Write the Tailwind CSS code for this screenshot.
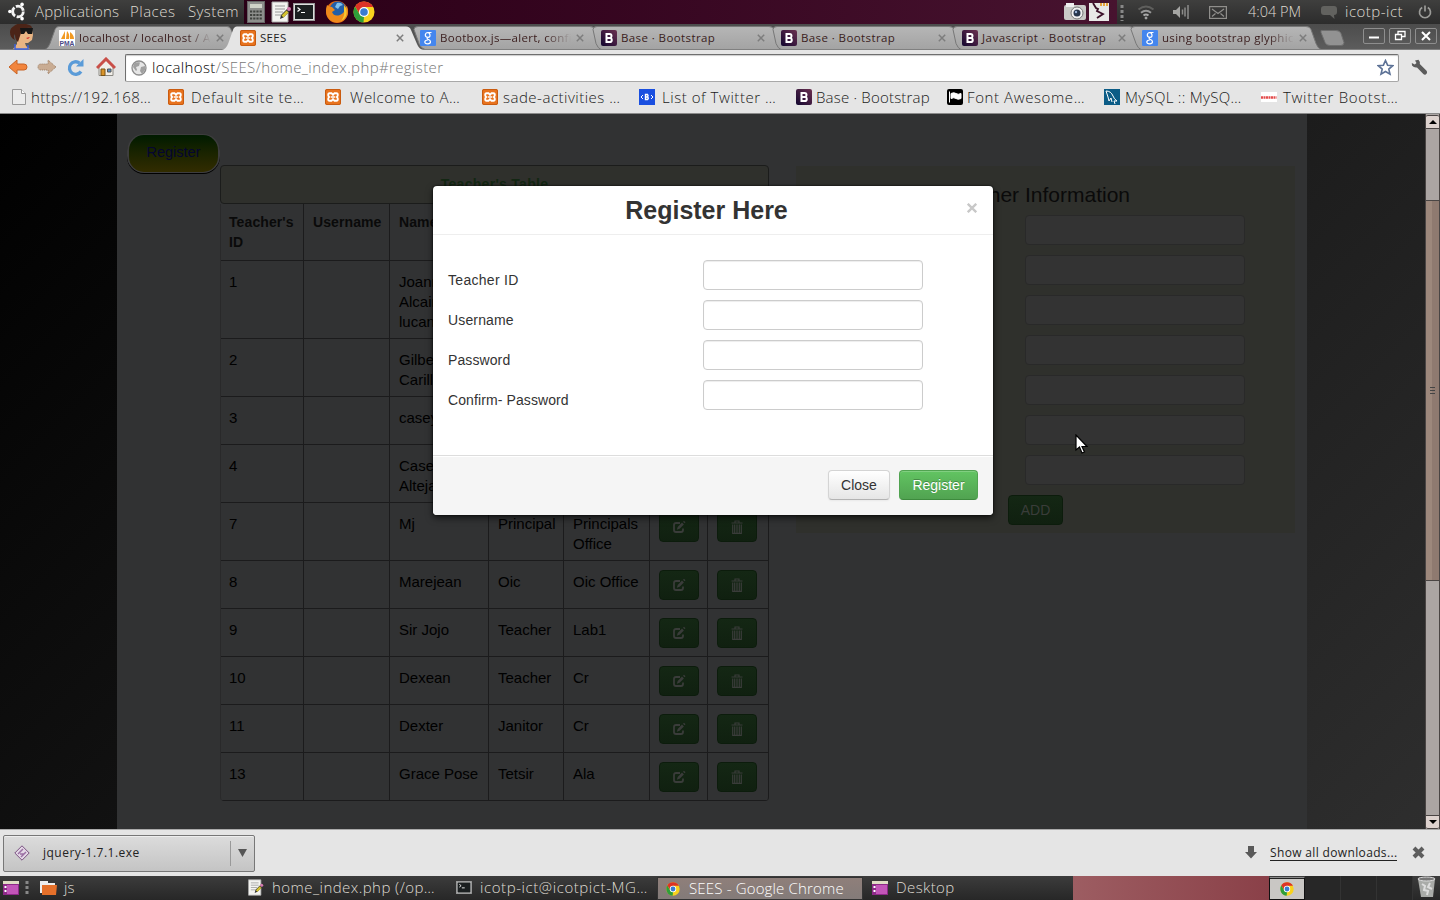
<!DOCTYPE html>
<html lang="en">
<head>
<meta charset="utf-8">
<title>SEES</title>
<script src="https://cdn.jsdelivr.net/npm/@tailwindcss/browser@4"></script>
</head>
<body class="w-[1440px] h-[900px] overflow-hidden bg-black font-['Open_Sans','Noto_Sans',sans-serif]">
<svg class="absolute size-0">
  <symbol id="chrome" viewBox="0 0 22 22"><circle cx="11" cy="11" r="10.500" fill="#f7d21e"/><path d="M2 5.600A10.500 10.500 0 0 1 20.300 6H11L6.800 13z" fill="#dd3226"/><path d="M2 5.600 6.500 13 11 16l-.5 5.500A10.500 10.500 0 0 1 2 5.600z" fill="#2f9e3a"/><circle cx="11" cy="11" r="5" fill="#fff"/><circle cx="11" cy="11" r="3.800" fill="#3a7bd0"/></symbol>
  <symbol id="xampp" viewBox="0 0 16 16"><rect width="16" height="16" rx="2" fill="#e8731e"/><rect x=".5" y=".5" width="15" height="15" rx="1.500" fill="none" stroke="#c95b10"/><path d="M4.500 4.200h2L8 5.800l1.500-1.600h2q1.300 0 1.300 1.800 0 1.300-1 2 1 .7 1 2 0 1.800-1.300 1.800h-2L8 10.200l-1.500 1.600h-2q-1.300 0-1.300-1.800 0-1.300 1-2-1-.7-1-2 0-1.800 1.300-1.800z" fill="none" stroke="#fff" stroke-width="1.900"/><path d="M6 8h4" stroke="#fff" stroke-width="1.500"/></symbol>
  <symbol id="boot" viewBox="0 0 16 16"><rect width="16" height="16" rx="2" fill="url(#bg1)"/><path d="M5.500 4v8h3.300q2 0 2-2.100 0-1.600-1.500-1.900Q10.500 7.500 10.500 6q0-2-2-2zM6 8h3" fill="none" stroke="#fff" stroke-width="2"/></symbol>
  <linearGradient id="bg1" x1="0" y1="1" x2="1" y2="0"><stop offset="0" stop-color="#12062f"/><stop offset="1" stop-color="#6b3050"/></linearGradient>
  <symbol id="goog" viewBox="0 0 16 16"><rect width="16" height="16" rx="1" fill="#4486ee"/><path d="M11.500 2.500H8q-2.700.3-2.700 2.500T7.800 7.300 10 5 8 2.600M7.500 7.500q-1 1 .5 1.700 2.500 1 2.500 2.600 0 2-2.800 2-2.900 0-2.900-1.800T7.800 10" fill="none" stroke="#fff" stroke-width="1.200"/></symbol>
  <symbol id="tx" viewBox="0 0 8 8"><path d="M.8.8l6.400 6.400M7.200.8.800 7.200" stroke="#7d7d7d" stroke-width="1.500"/></symbol>
  <symbol id="term" viewBox="0 0 22 18"><rect x=".5" y=".5" width="21" height="17" fill="#ddd" stroke="#999"/><rect x="2" y="2" width="18" height="14" fill="#1b1f20"/><path d="M4.500 4.500 7 6.500 4.500 8.500M8 9.500h4" stroke="#fff" stroke-width="1.200" fill="none"/></symbol>
  <symbol id="note" viewBox="0 0 20 22"><path d="M1 1h16v20H1z" fill="#f3f3f0" stroke="#aaa"/><path d="M4 5h10M4 8h10M4 11h8M4 14h6" stroke="#999"/><path d="M9 18l1-4 7-7 2.500 2.500-7 7z" fill="#333"/><path d="M10.500 14.500l5-5 2 2-5 5z" fill="#d4c22f"/><circle cx="18" cy="8" r="2" fill="#d77bb0"/></symbol>
  <symbol id="desk" viewBox="0 0 16 14"><rect width="16" height="14" fill="#8d2a88"/><rect width="16" height="3" fill="#dfdcc4"/><rect x="4" y="4" width="11" height="9" fill="#c255b8"/><path d="M1.500 5h2v2h-2zM1.500 9h2v2h-2z" fill="#fff"/></symbol>
  <symbol id="edit" viewBox="0 0 14 14"><path d="M8 3H4Q2 3 2 5v5q0 2 2 2h5q2 0 2-2V8.500" fill="none" stroke="#3a3c3a" stroke-width="1.800"/><path d="M4.800 9.800l.9-2.900 4.300-4.300 1.900 1.900-4.300 4.300z" fill="#3a3c3a"/><path d="M11 1.700l1-1 1.500 1.500-1 1z" fill="#3a3c3a"/></symbol>
  <symbol id="trash" viewBox="0 0 12 14"><path d="M.5 3h11M4 3V1h4v2" fill="none" stroke="#3a3c3a" stroke-width="1.200"/><path d="M1.700 4.500v8.900h8.600V4.500M3.700 4.500v9M6 4.500v9M8.300 4.500v9" fill="none" stroke="#3a3c3a" stroke-width="1.200"/></symbol>
</svg>

<!-- desktop top panel -->
<header class="flex h-6 text-[15px] font-light text-[#dfdbd2]">
  <div class="flex w-[244px] items-center bg-linear-to-b from-[#3f3f3e] to-[#2c2c2c] pb-px pl-2">
    <svg class="mr-[8px] size-[19px] shrink-0" viewBox="0 0 20 20"><circle cx="10.500" cy="10" r="5.600" fill="none" stroke="#f2f2f2" stroke-width="3" stroke-dasharray="10 1.730"/><circle cx="2" cy="10" r="1.900" fill="#fff"/><circle cx="14.800" cy="2.500" r="1.900" fill="#fff"/><circle cx="14.800" cy="17.500" r="1.900" fill="#fff"/></svg>
    <span class="w-[95px] whitespace-nowrap tracking-[0.2px]">Applications</span><span class="w-[58px] whitespace-nowrap tracking-[0.5px]">Places</span><span class="tracking-[0.4px]">System</span>
  </div>
  <div class="flex flex-1 items-center bg-linear-to-r from-[#2a0016] to-[#47132f] pl-[3px]">
    <svg class="mr-[6px] h-[22px] w-[18px]" viewBox="0 0 18 22"><rect x=".5" y=".5" width="17" height="21" fill="#8d8f8c" stroke="#666"/><rect x="3" y="3" width="12" height="4" fill="#cfd3c8"/><path d="M3 10.500h12M3 14h12M3 17.500h12" stroke="#3f423e" stroke-width="2" stroke-dasharray="2.200 1"/></svg>
    <svg class="mr-[2px] h-[22px] w-5"><use href="#note"/></svg>
    <svg class="mr-[10px] h-[18px] w-[22px]"><use href="#term"/></svg>
    <svg class="mr-[4px] size-[24px]" viewBox="0 0 24 24"><circle cx="12" cy="12" r="11" fill="#e66a12"/><circle cx="13" cy="10" r="8.500" fill="#235fa8"/><path d="M12 3q4-1 6 2l-3 1-2 3-3-2z" fill="#7fc0ea"/><path d="M2 5q2 2 5 2l3 3-3 2q2 5 8 3 5-2 5-7l2-2q3 9-3 14-7 5-14 0-6-6-3-15z" fill="#ee8a1c"/><path d="M19 5q4 5 2 11-2 4-5 5 4-5 3-10z" fill="#f7c933"/></svg>
    <svg class="size-[22px]"><use href="#chrome"/></svg>
    <svg class="ml-auto h-[20px] w-[46px]" viewBox="0 0 46 20"><rect y="3" width="22" height="15" rx="2" fill="#c9c9c6"/><rect x="2" y="1" width="8" height="4" fill="#eee"/><circle cx="13" cy="11" r="6" fill="#f0f0f0" stroke="#777"/><circle cx="13" cy="11" r="3.500" fill="#27364d"/><circle cx="12" cy="10" r="1.200" fill="#9bb4d8"/><rect x="25" y="1" width="20" height="18" fill="#e8e8e6"/><path d="M36 2.500h8" stroke="#e7a43b" stroke-width="3" stroke-dasharray="2 1"/><path d="M29 1l3 5 2 1-1 2 6 3-6 4" fill="none" stroke="#3b1028" stroke-width="1.800"/></svg>
    <span class="w-[7px]"></span>
  </div>
  <div class="flex w-[323px] items-center bg-linear-to-b from-[#3f3f3e] to-[#2c2c2c] text-[#dfdbd2]">
    <svg class="ml-[3px] h-[18px] w-[4px]" viewBox="0 0 4 18"><path d="M2 2v16" stroke="#888" stroke-width="3" stroke-dasharray="3 2"/></svg>
    <svg class="ml-[13px] h-4 w-[18px]" viewBox="0 0 18 16" fill="none" stroke="#5f5f5d" stroke-width="2"><path d="M1.500 5.500q7.500-6 15 0"/><path d="M4 8.700q5-4 10 0" stroke="#999"/><path d="M6.500 11.500q2.500-2 5 0" stroke="#aaa"/><circle cx="9" cy="14" r="1" fill="#aaa" stroke="#aaa" stroke-width="1"/></svg>
    <svg class="ml-[17px] h-4 w-[18px]" viewBox="0 0 18 16"><path d="M1 6h3l4-4v12l-4-4H1z" fill="#a5a5a3"/><path d="M10.500 5.500v5M13 3.500v9M16 1v14" stroke="#8c8c8a" stroke-width="1.500"/></svg>
    <svg class="ml-[19px] h-[13px] w-[18px]" viewBox="0 0 18 13" fill="none" stroke="#908f8c" stroke-width="1.200"><rect x=".6" y=".6" width="16.800" height="11.800"/><path d="M3 3l6 4.500L15 3M3 10.500l3.500-3M15 10.500l-3.500-3"/></svg>
    <span class="ml-[21px] w-[73px] whitespace-nowrap text-[14.500px]">4:04 PM</span>
    <svg class="h-[15px] w-4" viewBox="0 0 16 15"><path d="M3 1h10q3 0 3 3v3q0 3-3 3l.5 4L9 10H3Q0 10 0 7V4q0-3 3-3z" fill="#62625f"/></svg>
    <span class="ml-[8px] w-[73px] pb-px tracking-[0.5px] whitespace-nowrap">icotp-ict</span>
    <svg class="size-[14px]" viewBox="0 0 14 14" fill="none" stroke="#9b9b98" stroke-width="1.700"><path d="M4.200 2.500a5.500 5.500 0 1 0 5.600 0M7 .5v6"/></svg>
  </div>
</header>

<!-- browser tab strip -->
<div class="relative h-[26px] bg-linear-to-b from-[#4c4c4c] to-[#5d5d5d]">
  <svg class="absolute inset-0" width="1440" height="26" viewBox="0 0 1440 26">
    <defs><linearGradient id="tg" x1="0" y1="0" x2="0" y2="1"><stop offset="0" stop-color="#b6b6b6"/><stop offset="1" stop-color="#a3a3a3"/></linearGradient></defs>
    <g fill="url(#tg)" stroke="#777">
      <path d="M45 25.500q3-1 5-6l5-14q1-3 4-3h168q3 0 4 3l9 20z"/>
      <path d="M425 25.500q-4-1-6-6l-5-14q0-3 4-3h172q4 0 5 3l6 20z"/>
      <path d="M601 25.500q-3-1-5-6l-3-14q0-3 4-3h172q4 0 5 3l6 20z"/>
      <path d="M781 25.500q-3-1-5-6l-3-14q0-3 4-3h172q4 0 5 3l6 20z"/>
      <path d="M961 25.500q-3-1-5-6l-3-14q0-3 4-3h172q4 0 5 3l6 20z"/>
      <path d="M1141 25.500q-3-1-5-6l-5-14q0-3 4-3h171q4 0 5 3l5 14q2 5 5 6z"/>
      <path d="M1321 6.500h15q4 0 5 3l3 9q0 3-3 3h-11q-4 0-5-3l-4-10z" fill="#929292" stroke="#6d6d6d"/>
    </g>
    <path d="M0 25.500h1440" stroke="#808080"/>
    <path d="M222 26q4-1 6-6l5-14q1-3.500 4-3.500h169q4 0 5 3.500l6 14q2 5 6 6z" fill="#e5e5e5"/>
    <path d="M17 6h15l1 5-1 5-4 3h-3l1 3 4 3H13l4-5z" fill="#e8b483"/>
    <path d="M14 2q5-4 12-2 6 1 6 4-7-1-10 2l-2 6-2 6q-3-2-3-8-2 2 0 6-5-2-5-8 0-4 4-6z" fill="#4b2417"/>
    <path d="M20 4h13l-1 6h-4l-2-3-2 3h-3z" fill="#161616"/><path d="M26 14l4-1-2 2z" fill="#c22"/>
    <path d="M15 20v5h13v-4" stroke="#3c62dd" stroke-width="1.500" fill="none"/>
  </svg>
  <div class="relative flex h-full items-center pl-[59px] pt-[2px] text-[11.500px] text-[#3a1d1d]">
    <div class="flex w-[181px] items-center">
      <svg class="mr-[4px] size-4" viewBox="0 0 16 16"><rect width="16" height="16" fill="#fff"/><path d="M2 9 6 1v8zM7 9l1-8q3 3 2 8zM11 9V2q4 3 4 7z" fill="#f29a22"/><text x=".5" y="15.500" font-size="7" font-weight="bold" textLength="15" lengthAdjust="spacingAndGlyphs" fill="#4a4a86" font-family="Liberation Sans">PMA</text></svg>
      <span class="w-[132px] overflow-hidden whitespace-nowrap tracking-[0.300px] [mask-image:linear-gradient(to_right,#000_108px,transparent)]">localhost / localhost / A</span><svg class="ml-[5px] size-2"><use href="#tx"/></svg>
    </div>
    <div class="flex w-[180px] items-center"><svg class="mr-[4px] size-4"><use href="#xampp"/></svg><span class="w-[136px] tracking-[0.3px] text-[#222]">SEES</span><svg class="size-2"><use href="#tx"/></svg></div>
    <div class="flex w-[181px] items-center"><svg class="mr-[4px] size-4"><use href="#goog"/></svg><span class="w-[131px] overflow-hidden whitespace-nowrap tracking-[0.300px] [mask-image:linear-gradient(to_right,#000_106px,transparent)]">Bootbox.js—alert, confirm</span><svg class="ml-[5px] size-2"><use href="#tx"/></svg></div>
    <div class="flex w-[180px] items-center"><svg class="mr-[4px] size-4"><use href="#boot"/></svg><span class="w-[136px] whitespace-nowrap tracking-[0.4px]">Base · Bootstrap</span><svg class="size-2"><use href="#tx"/></svg></div>
    <div class="flex w-[181px] items-center"><svg class="mr-[4px] size-4"><use href="#boot"/></svg><span class="w-[137px] whitespace-nowrap tracking-[0.4px]">Base · Bootstrap</span><svg class="size-2"><use href="#tx"/></svg></div>
    <div class="flex w-[180px] items-center"><svg class="mr-[4px] size-4"><use href="#boot"/></svg><span class="w-[136px] whitespace-nowrap tracking-[0.5px]">Javascript · Bootstrap</span><svg class="size-2"><use href="#tx"/></svg></div>
    <div class="flex w-[181px] items-center"><svg class="mr-[4px] size-4"><use href="#goog"/></svg><span class="w-[132px] overflow-hidden whitespace-nowrap tracking-[0.300px] [mask-image:linear-gradient(to_right,#000_106px,transparent)]">using bootstrap glyphicon</span><svg class="ml-[5px] size-2"><use href="#tx"/></svg></div>
    <svg class="mb-[5px] ml-[40px] h-4 w-[75px] shrink-0" viewBox="0 0 75 16" fill="none" stroke="#8e8e8e"><rect x=".5" y=".5" width="21" height="15" rx="1.500"/><rect x="26.500" y=".5" width="21" height="15" rx="1.500"/><rect x="52.500" y=".5" width="21" height="15" rx="1.500"/><path d="M6 9.500h10" stroke="#fff" stroke-width="2"/><path d="M32.500 6.500h6v5h-6zM35 6V3.500h7v5h-3" stroke="#fff" stroke-width="1.300"/><path d="M59 4l8 8M67 4l-8 8" stroke="#fff" stroke-width="2"/></svg>
  </div>
</div>

<!-- navigation bar -->
<div class="flex h-[34px] items-center bg-[#e5e5e5] pl-[8px]">
  <svg class="h-[18px] w-5 shrink-0" viewBox="0 0 20 18"><path d="M1 9l8-7v4h7q3 0 3 3t-3 3H9v4z" fill="#f2853d" stroke="#c96426"/></svg>
  <svg class="ml-[9px] h-[18px] w-5 shrink-0" viewBox="0 0 20 18"><path d="M19 9l-8-7v4H4Q1 6 1 9t3 3h7v4z" fill="#c9ac93" stroke="#9c7d63" stroke-dasharray="1 1"/></svg>
  <svg class="ml-[9px] size-[19px] shrink-0" viewBox="0 0 19 19"><path d="M15 13.500a6.300 6.300 0 1 1-1.500-8.500" fill="none" stroke="#5a9bd8" stroke-width="3.300"/><path d="M10 8.500h7.500V1z" fill="#5a9bd8"/></svg>
  <svg class="ml-[11px] size-5 shrink-0" viewBox="0 0 20 20"><path d="M3 9.500v9h14v-9L10 3z" fill="#f1eee8" stroke="#8c8a84"/><path d="M1 11l9-9 9 9" fill="none" stroke="#c94f48" stroke-width="3"/><path d="M5 12h4v6.500H5z" fill="#d9942a" stroke="#795317"/><path d="M11.500 12H15v3h-3.500z" fill="#5b94ce" stroke="#555"/></svg>
  <div class="ml-[9px] mt-[2px] flex h-7 w-[1274px] items-center rounded-xs border border-t-[#6f6f6f] border-r-[#999] border-b-[#a8a8a8] border-l-[#6f6f6f] bg-white pb-px pl-[5px] shadow-[inset_0_1px_1px_#ccc]">
    <svg class="size-4" viewBox="0 0 16 16"><circle cx="8" cy="8" r="7" fill="#e6e6e6" stroke="#8d8d8d" stroke-width="1.300"/><path d="M3 3.500q4-2 6-1L8 6 5 7l1 3-1 1-3-4zM10 7l4-1v4l-3 4-2-3z" fill="#a0a0a0"/></svg>
    <span class="ml-[5px] pb-px text-[15px] font-light tracking-[0.38px] whitespace-nowrap text-[#777]"><span class="text-black">localhost</span>/SEES/home_index.php#register</span>
    <svg class="mr-[4px] ml-auto size-[17px]" viewBox="0 0 17 17"><path d="M8.500 1.500l2.100 4.700 5.100.5-3.900 3.400 1.200 5.100-4.500-2.700L4 15.200l1.200-5.100L1.300 6.700l5.100-.5z" fill="#fff" stroke="#5d7296" stroke-width="1.600"/></svg>
  </div>
  <svg class="ml-[12px] size-[17px]" viewBox="0 0 17 17"><path d="M4 1.500l3.500-.7Q9.500 3 8.800 5l7 7q1 2-1 3.500-1.500.5-2.500-.5L6 8.500Q3 9 1 6.500L.8 4l3 1.500 1.700-1.500z" fill="#5b5b5b"/></svg>
</div>

<!-- bookmarks -->
<div class="h-[30px] border-b border-[#8a8a8a] bg-[#e5e5e5] pl-[11px]">
  <div class="flex h-[26px] items-center text-[15px] font-light whitespace-nowrap text-[#1a1a1a]">
    <div class="flex w-[157px] items-center"><svg class="mr-[4px] size-4" viewBox="0 0 16 16"><path d="M1.500.5h9l4 4v11h-13z" fill="#ececec" stroke="#999"/><path d="M10.500.5v4h4" fill="#fff" stroke="#999"/></svg><span class="tracking-[0.37px]">https://192.168…</span></div>
    <div class="flex w-[157px] items-center"><svg class="mr-[7px] size-4"><use href="#xampp"/></svg><span class="tracking-[0.58px]">Default site te…</span></div>
    <div class="flex w-[157px] items-center"><svg class="mr-[9px] size-4"><use href="#xampp"/></svg><span class="tracking-[0.5px]">Welcome to A…</span></div>
    <div class="flex w-[157px] items-center"><svg class="mr-[5px] size-4"><use href="#xampp"/></svg><span class="tracking-[0.5px]">sade-activities …</span></div>
    <div class="flex w-[157px] items-center"><svg class="mr-[7px] size-4" viewBox="0 0 16 16"><rect width="16" height="16" fill="#1a4fe0"/><path d="M4 6L2 8l2 2M12 6l2 2-2 2" fill="none" stroke="#fff"/><path d="M6.500 5.500v5h2q1.500-1.300 0-2.500 1.200-1.200 0-2.500zM6.500 8h2" fill="none" stroke="#fff" stroke-width="1.400"/></svg><span class="tracking-[0.55px]">List of Twitter …</span></div>
    <div class="flex w-[151px] items-center"><svg class="mr-[4px] size-4"><use href="#boot"/></svg><span class="tracking-[0.2px]">Base · Bootstrap</span></div>
    <div class="flex w-[157px] items-center"><svg class="mr-[4px] size-4" viewBox="0 0 16 16"><rect width="16" height="16" rx="2" fill="#000"/><path d="M2.500 2.500v11M4 4.500q3-1.500 5 0t5 0v5q-3 1.500-5 0t-5 0z" fill="#fff" stroke="#fff"/></svg><span class="tracking-[0.6px]">Font Awesome…</span></div>
    <div class="flex w-[157px] items-center"><svg class="mr-[5px] size-4" viewBox="0 0 16 16"><rect width="16" height="16" fill="#0b5c86"/><path d="M2 2q5 0 7 5 1 3 4 5l-3 0 1 3M2 2l2 6 1 4 2-3 1 4" fill="none" stroke="#fff"/></svg><span class="tracking-[0.3px]">MySQL :: MySQ…</span></div>
    <div class="flex items-center"><svg class="mr-[6px] size-4" viewBox="0 0 16 16"><rect y="3" width="16" height="10" fill="#fff"/><path d="M0 8.500h15.500" stroke="#e34b4b" stroke-width="2.500" stroke-dasharray="2 .5"/></svg><span class="tracking-[0.7px]">Twitter Bootst…</span></div>
  </div>
</div>

<!-- page -->
<main class="relative flex h-[715px] bg-[linear-gradient(135deg,#000,#2e2e2e)] font-['Liberation_Sans',Arial,sans-serif]">
  <div class="ml-[117px] flex h-full w-[1190px] items-start bg-[#313233] pl-[10px]">
    <button class="mt-[20px] flex h-[39px] w-[93px] items-center justify-center rounded-[17px] bg-[#3d3d3e] shadow-[0_1px_0_#000]"><span class="mb-px flex h-[37px] w-[89px] items-center justify-center rounded-[15px] bg-linear-to-b from-[#001b00] to-[#322c00] text-[14.500px] text-[#050530]">Register</span></button>
    <section class="mt-[51px] w-[549px] text-[15px] leading-5 text-black">
      <h2 class="h-[39px] rounded-[4px] border border-[#1b1c1b] bg-[#2f302c] pt-[8px] text-center text-sm leading-5 font-bold tracking-[0.3px] text-[#132713]">Teacher's Table</h2>
      <div id="rows" class="overflow-hidden rounded-b-[4px] border-r border-l border-[#1b1b1c] border-l-[#29292a]"></div>
    </section>
    <section class="mt-[52px] ml-[27px] flex h-[367px] w-[499px] flex-col bg-[#2f302c]">
      <h3 class="mt-[19px] h-[30px] pr-[165px] text-right text-[21px] leading-[20px] text-[#0a0a0a]">Teacher Information</h3>
      <div id="fields" class="ml-[229px] flex flex-col gap-[10px]"></div>
      <button class="mt-[10px] ml-[212px] h-[30px] w-[55px] rounded-[4px] border border-[#0c1c0c] bg-linear-to-b from-[#142714] to-[#102010] text-sm text-[#3a3d3a]">ADD</button>
    </section>
  </div>

  <!-- modal -->
  <div class="absolute top-[72px] left-[433px] flex h-[329px] w-[560px] flex-col overflow-hidden rounded-[4px] bg-white text-sm text-[#333] shadow-[0_0_2px_#000,0_3px_7px_rgba(0,0,0,.6)]">
    <div class="relative h-[49px] border-b border-[#eee] pr-[13px] text-center text-[25px] leading-[48px] font-bold">Register Here
      <svg class="absolute top-[17px] right-[16px] size-[10px]" viewBox="0 0 9 9"><path d="M.7.7l7.600 7.600M8.300.7.700 8.300" stroke="#c8c8c8" stroke-width="2.100"/></svg>
    </div>
    <div class="flex h-[220px] flex-col gap-[10px] pt-[25px] pl-[15px]">
      <label class="flex h-[30px]"><span class="w-[255px] pt-[10px] tracking-[0.3px]">Teacher ID</span><input class="w-[220px] rounded-[4px] border border-[#ccc] bg-white shadow-[inset_0_1px_1px_rgba(0,0,0,.075)]"></label>
      <label class="flex h-[30px]"><span class="w-[255px] pt-[10px] tracking-[0.15px]">Username</span><input class="w-[220px] rounded-[4px] border border-[#ccc] bg-white shadow-[inset_0_1px_1px_rgba(0,0,0,.075)]"></label>
      <label class="flex h-[30px]"><span class="w-[255px] pt-[10px] tracking-[0.1px]">Password</span><input class="w-[220px] rounded-[4px] border border-[#ccc] bg-white shadow-[inset_0_1px_1px_rgba(0,0,0,.075)]"></label>
      <label class="flex h-[30px]"><span class="w-[255px] pt-[10px] tracking-[0.1px]">Confirm- Password</span><input class="w-[220px] rounded-[4px] border border-[#ccc] bg-white shadow-[inset_0_1px_1px_rgba(0,0,0,.075)]"></label>
    </div>
    <div class="flex flex-1 justify-end gap-[9px] border-t border-[#ddd] bg-[#f5f5f5] pt-[14px] pr-[15px] shadow-[inset_0_1px_0_#fff]">
      <button class="h-[30px] w-[62px] rounded-[4px] border border-[#d4d4d4] border-b-[#b3b3b3] bg-linear-to-b from-white to-[#e6e6e6] shadow-[0_1px_2px_rgba(0,0,0,.05)]">Close</button>
      <button class="h-[30px] w-[79px] rounded-[4px] border border-[#51a351] border-b-[#3d8b3d] bg-linear-to-b from-[#62c462] to-[#51a351] text-white shadow-[inset_0_1px_0_rgba(255,255,255,.2)] [text-shadow:0_-1px_0_rgba(0,0,0,.25)]">Register</button>
    </div>
  </div>

  <!-- mouse pointer -->
  <svg class="absolute top-[320px] left-[1075px] h-[22px] w-[14px]" viewBox="0 0 14 22"><path d="M1 1v15l3.500-3 2.500 6 2.500-1L7 12.500h5z" fill="#fff" stroke="#000" stroke-width="1.200"/></svg>

  <!-- scrollbar -->
  <div class="ml-auto flex w-[15px] flex-col border-x border-[#4a4544] bg-[#aba5a3]">
    <div class="mt-px flex h-[14px] items-center justify-center rounded-t-[2px] border-y border-[#4a4544] bg-[#ddd2ce]"><svg class="h-1 w-2" viewBox="0 0 8 4"><path d="M0 4 4 0l4 4z"/></svg></div>
    <div class="mt-[71px] flex h-[381px] items-center justify-center border-y border-[#4a4544] bg-linear-to-r from-[#9d887c] from-50% to-[#8f7a70] to-50%"><svg class="h-2 w-[5px]" viewBox="0 0 5 8"><path d="M0 .5h5M0 3.500h5M0 6.500h5" stroke="#444"/></svg></div>
    <div class="mt-auto flex h-[14px] items-center justify-center rounded-b-[2px] border-y border-[#4a4544] bg-[#ddd2ce]"><svg class="h-1 w-2" viewBox="0 0 8 4"><path d="M0 0l4 4 4-4z"/></svg></div>
  </div>
</main>

<!-- download shelf -->
<div class="flex h-[47px] items-center border-t border-[#aaa] bg-[#e5e5e5] pl-[3px] text-[12px] text-[#222]">
  <div class="flex h-[37px] w-[252px] items-center rounded-xs border border-[#777] bg-linear-to-b from-[#dcdcdc] to-[#c4c4c4] pl-[10px] shadow-[inset_0_1px_0_#eee]">
    <svg class="size-4" viewBox="0 0 16 16"><path d="M8 .8 15.200 8 8 15.200.8 8z" fill="#e3d8e6" stroke="#7a5080"/><path d="M4 9l5-5M7 12l5-5M6 9h4" stroke="#9b6fa3" stroke-width="1.500"/></svg>
    <span class="ml-[13px] tracking-[0.48px]">jquery-1.7.1.exe</span>
    <span class="mr-[7px] ml-auto h-[25px] w-px bg-[#999]"></span>
    <svg class="mr-[7px] h-2 w-[9px]" viewBox="0 0 9 8"><path d="M0 0h9L4.500 8z" fill="#555"/></svg>
  </div>
  <svg class="mb-[2px] ml-auto h-[13px] w-3" viewBox="0 0 12 13"><path d="M3 0h6v6h3l-6 6.500L0 6h3z" fill="#595959"/></svg>
  <span class="mr-[15px] ml-[13px] w-[127px] border-b border-[#222] leading-[14px] whitespace-nowrap tracking-[0.35px]">Show all downloads...</span>
  <svg class="mr-[15px] mb-[2px] size-[13px]" viewBox="0 0 13 13"><path d="M2 2l9 9M11 2l-9 9" stroke="#5d5d5d" stroke-width="4"/></svg>
</div>

<!-- desktop bottom panel -->
<footer class="flex h-6 bg-linear-to-b from-[#3c3c3c] to-[#272727] text-[15px] font-light whitespace-nowrap text-[#dfdbd2]">
  <div class="flex w-[247px] items-center pb-px pl-[3px]">
    <svg class="h-[14px] w-4"><use href="#desk"/></svg>
    <svg class="ml-[6px] h-4 w-1" viewBox="0 0 4 16"><path d="M2 1v15" stroke="#888" stroke-width="3" stroke-dasharray="3 2"/></svg>
    <svg class="ml-[11px] h-[14px] w-[17px]" viewBox="0 0 17 14"><path d="M0 0h8v2h7v10H0z" fill="#eee"/><path d="M2 4h15l-1 10H2z" fill="#e5702a"/></svg>
    <span class="ml-[7px]">js</span>
  </div>
  <div class="flex w-[209px] items-center pb-px"><svg class="h-[17px] w-[17px]"><use href="#note"/></svg><span class="ml-[8px] tracking-[0.45px]">home_index.php (/op…</span></div>
  <div class="flex w-[201px] items-center pb-px"><svg class="h-[13px] w-4"><use href="#term"/></svg><span class="ml-[8px] tracking-[0.58px]">icotp-ict@icotpict-MG…</span></div>
  <div class="mt-px flex w-[206px] items-center border border-[#333] bg-linear-to-b from-[#8f7f7a] to-[#837b79] pl-[8px] text-white"><svg class="size-[14px]"><use href="#chrome"/></svg><span class="ml-[9px] tracking-[0.16px]">SEES - Google Chrome</span></div>
  <div class="flex w-[210px] items-center pb-px pl-[9px]"><svg class="h-[14px] w-4"><use href="#desk"/></svg><span class="ml-[8px] tracking-[0.4px]">Desktop</span></div>
  <div class="w-[196px] bg-linear-to-r from-[#9d5d62] to-[#8a4048]"></div>
  <div class="mt-px flex w-[36px] items-center justify-center border border-[#111] border-t-[#888] bg-[#c9c7c4] shadow-[inset_0_1px_0_#222]"><svg class="size-[14px]"><use href="#chrome"/></svg></div>
  <div class="w-[36px] border-r border-[#333] bg-[#272727]"></div><div class="w-[36px] border-r border-[#333] bg-[#272727]"></div><div class="w-[36px] border-r border-[#333] bg-[#272727]"></div>
  <svg class="ml-[4px] h-[22px] w-5" viewBox="0 0 20 22"><path d="M1 3h17l-2 18H4z" fill="#a9aba8"/><ellipse cx="9.500" cy="3" rx="8.500" ry="2" fill="#777" stroke="#ddd"/><path d="M5 8l3 2-1 4 4 1-1 4M13 7l-2 4 4 2" stroke="#ddd" stroke-width="2" fill="none"/></svg>
</footer>

<script>
const cell = 'border-r border-b border-[#1b1b1c] pl-[9px] first:pl-2 last:border-r-0';
const grid = 'grid grid-cols-[83px_86px_99px_75px_86px_58px_60px]';
const btn = 'flex h-[30px] w-10 items-center justify-center rounded-[4px] border border-[#0c1c0c] bg-linear-to-b from-[#142714] to-[#102010]';
const rows = [
  [78, '1', 'Joanna<br>Alcaine<br>lucan', '', ''],
  [58, '2', 'Gilbert<br>Carillo', '', ''],
  [48, '3', 'casey', '', ''],
  [58, '4', 'Casey<br>Alteja', '', ''],
  [58, '7', 'Mj', 'Principal', 'Principals<br>Office'],
  [48, '8', 'Marejean', 'Oic', 'Oic Office'],
  [48, '9', 'Sir Jojo', 'Teacher', 'Lab1'],
  [48, '10', 'Dexean', 'Teacher', 'Cr'],
  [48, '11', 'Dexter', 'Janitor', 'Cr'],
  [48, '13', 'Grace Pose', 'Tetsir', 'Ala']
];
let html = `<div class="${grid} h-[57px] text-sm leading-5 font-bold tracking-[0.1px] text-[#0a0a0a]">` +
  ["Teacher's<br>ID", 'Username', 'Name', '', '', '', ''].map(t => `<div class="${cell} pt-2">${t}</div>`).join('') + '</div>';
for (const [h, id, name, job, room] of rows)
  html += `<div class="${grid}" style="height:${h}px">` +
    [id, '', name, job, room].map(t => `<div class="${cell} pt-[11px]">${t}</div>`).join('') +
    `<div class="${cell} pt-[9px]"><div class="${btn}"><svg class="size-[14px]"><use href="#edit"/></svg></div></div>` +
    `<div class="${cell} pt-[9px]"><div class="${btn}"><svg class="h-[14px] w-3"><use href="#trash"/></svg></div></div></div>`;
document.getElementById('rows').innerHTML = html;
document.getElementById('fields').innerHTML = '<div class="h-[30px] w-[220px] rounded-[4px] border border-[#292929] bg-[#333]"></div>'.repeat(7);
</script>
</body>
</html>
